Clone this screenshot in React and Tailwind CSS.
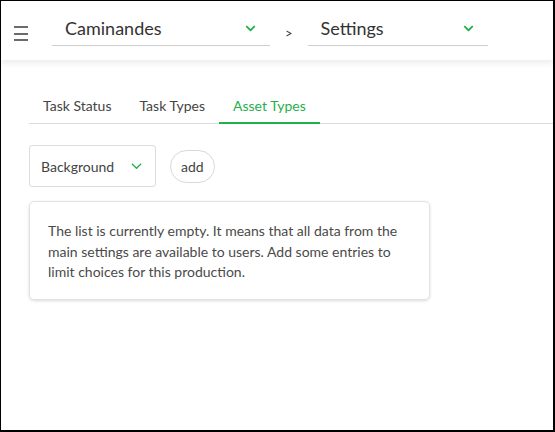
import React from 'react';

const Chevron = ({ className }) => (
  <svg className={className} viewBox="0 0 448 512" fill="currentColor">
    <path d="M207 381.5L12.7 187.1c-9.4-9.4-9.4-24.6 0-33.9l22.7-22.7c9.4-9.4 24.5-9.4 33.9 0L224 284.5l154.7-154c9.4-9.3 24.5-9.3 33.9 0l22.7 22.7c9.4 9.4 9.4 24.6 0 33.9L241 381.5c-9.4 9.4-24.6 9.4-34 0z" />
  </svg>
);

const ThinChevron = ({ className }) => (
  <svg className={className} viewBox="0 0 12 8" fill="none" stroke="currentColor" strokeWidth="1.3">
    <path d="M1 1.5l5 5 5-5" />
  </svg>
);

const HeaderSelect = ({ label, width }) => (
  <div className={`flex items-center justify-between h-[34px] border-b border-[#cfcfcf] pl-[13px] pr-[14px] ${width}`}>
    <span className="text-[18px] text-[#333]">{label}</span>
    <Chevron className="w-[11px] h-[11px] text-[#1fb04b]" />
  </div>
);

const App = () => {
  const tabs = ['Task Status', 'Task Types', 'Asset Types'];

  return (
    <div
      className="w-[555px] h-[432px] bg-white border-l border-t border-r-2 border-b-2 border-black overflow-hidden"
      style={{ fontFamily: 'Lato, "Noto Sans", sans-serif' }}
    >
      {/* Top bar */}
      <div className="h-[59px] flex items-center shadow-[0_3px_6px_rgba(0,0,0,0.08)]">
        <div className="w-[14px] ml-[13px] flex flex-col gap-[4.5px] mt-[6px]">
          <span className="block h-[2px] bg-[#6b6b6b]" />
          <span className="block h-[2px] bg-[#6b6b6b]" />
          <span className="block h-[2px] bg-[#6b6b6b]" />
        </div>
        <div className="ml-[24px] mt-[-4px]">
          <HeaderSelect label="Caminandes" width="w-[218px]" />
        </div>
        <span className="ml-[15px] mt-[6px] text-[13px] text-[#333]">&gt;</span>
        <div className="ml-[15px] mt-[-4px]">
          <HeaderSelect label="Settings" width="w-[180px]" />
        </div>
      </div>

      {/* Content */}
      <div className="pl-[28px] pt-[35px]">
        <div className="flex border-b border-[#dcdcdc] text-[14px]">
          {tabs.map((t) => (
            <div
              key={t}
              className={`px-[14px] pb-[6px] -mb-px ${
                t === 'Asset Types'
                  ? 'text-[#1fb04b] border-b-2 border-[#1fb04b] pb-[5px] px-[13px]'
                  : 'text-[#444]'
              }`}
            >
              {t}
            </div>
          ))}
        </div>

        <div className="flex items-center mt-[21px]">
          <div className="w-[127px] h-[42px] border border-[#dcdcdc] rounded-[3px] flex items-center justify-between pl-[11px] pr-[13px] text-[14px] text-[#444]">
            <span>Background</span>
            <ThinChevron className="w-[11px] h-[8px] text-[#1fb04b]" />
          </div>
          <button className="ml-[14px] h-[33px] px-[10px] rounded-full border border-[#d8d8d8] text-[14px] text-[#444]">
            add
          </button>
        </div>

        <div className="mt-[14px] w-[401px] rounded-[5px] border border-[#e2e2e2] shadow-[0_1px_3px_rgba(0,0,0,0.15)] px-[18px] pt-[19px] pb-[16px] text-[14px] leading-[20.5px] text-[#4a4a4a]">
          The list is currently empty. It means that all data from the main settings are available to users. Add some entries to limit choices for this production.
        </div>
      </div>
    </div>
  );
};

export default App;
